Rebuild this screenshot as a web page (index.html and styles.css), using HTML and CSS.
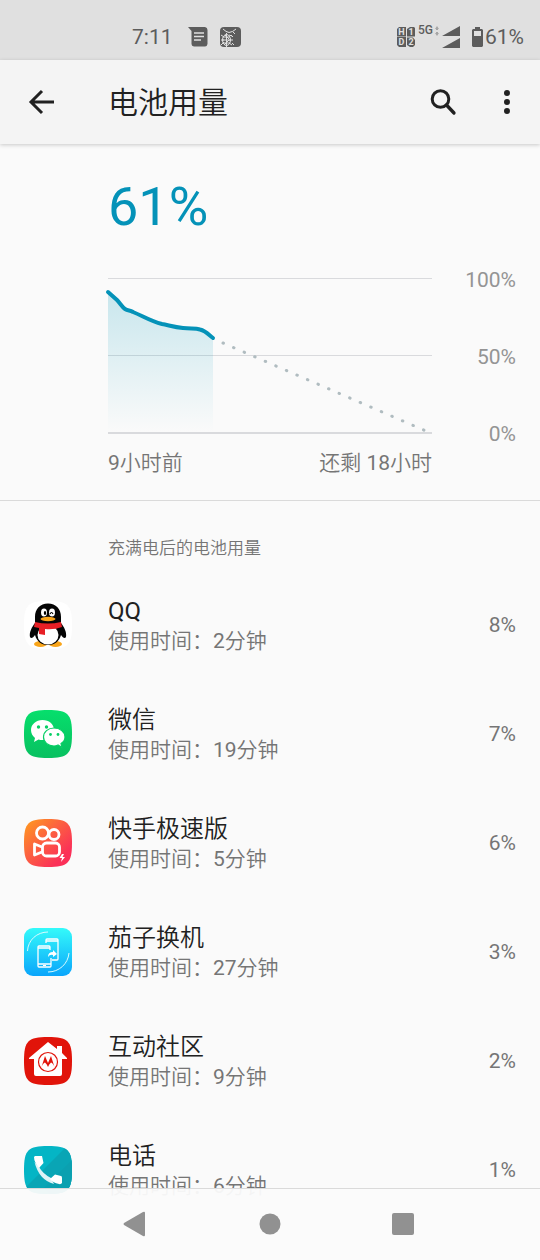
FILE: index.html
```html
<!DOCTYPE html>
<html lang="zh-CN">
<head>
  <meta charset="UTF-8" />
  <meta name="viewport" content="width=device-width, initial-scale=1" />
  <title>电池用量</title>
  <link rel="stylesheet" href="styles.css">
</head>
<body>

  <div class="status-bar">
    <div class="status-left">
      <span>7:11</span>
      <svg class="status-message" width="20" height="20" viewBox="0 0 20 20" aria-hidden="true">
        <path fill="#5c5c5c" d="M0 0H17Q19.500 .5 19.500 3V17Q19 19.500 17 19.500H6Q3.500 19 3.500 17V4Z"/>
        <path stroke="#e0e0e0" stroke-width="1.500" d="M6 6H16M6 9.500H16M6 13H13"/>
      </svg>
      <svg width="21" height="20" viewBox="0 0 21 20" aria-hidden="true">
        <rect width="21" height="20" rx="4" fill="#5c5c5c"/>
        <g fill="none" stroke="#e0e0e0">
          <path d="M3 2Q6 5 9 5.500Q13 5 16 2M1 8L4 10M1 13H4M1 18L4 15M12 9L9 8M13 13H9M12 18L9 16"/>
          <ellipse cx="6.500" cy="13" rx="4" ry="5.500"/>
          <path d="M6.500 6V20M3 10H10M2 13H11M3 16H10M5 8L9 12M4 18L9 13"/>
          <path d="M11 8L13 10M13 5L15 7M12 16L14 18"/>
        </g>
      </svg>
    </div>
    <div class="status-right">
      <svg width="19" height="20" viewBox="0 0 19 20" aria-hidden="true">
        <path fill="#5c5c5c" d="M2 0H9V9.500H0V2ZM2 10H9V20H2L0 18V10ZM13 0H17L18 1V9.500H10V2ZM10 10.500H16L18 13V18L16 20H13L10 18Z"/>
        <g class="sim-text">
          <text x="4.500" y="8">H</text>
          <text x="14" y="8">1</text>
          <text x="4.500" y="18">D</text>
          <text x="14" y="18">2</text>
        </g>
      </svg>
      <span class="network">5G</span>
      <svg width="26" height="22" viewBox="0 0 26 22" aria-hidden="true">
        <path fill="#a5a5a5" d="M2 0L4 3H0ZM2 10L0 7H4ZM1 3H3V4H1ZM1 6H3V7H1Z"/>
        <path fill="#5c5c5c" d="M25 0V10H7ZM25 12V22H7Z"/>
      </svg>
      <svg class="battery" width="11" height="20" viewBox="0 0 11 20" aria-hidden="true">
        <path fill="#5c5c5c" d="M3 0H8V2H10L11 3V19L10 20H1L0 19V3L1 2H3ZM2 4V9H9V4Z"/>
      </svg>
      <span>61%</span>
    </div>
  </div>

  <header class="app-bar">
    <button class="icon-button" aria-label="返回">
      <svg width="26" height="26" viewBox="0 0 26 26">
        <path fill="none" stroke="#212121" stroke-width="3" d="M25 13H3M13 2L2 13L13 24"/>
      </svg>
    </button>
    <h1>电池用量</h1>
    <button class="icon-button" aria-label="搜索">
      <svg width="26" height="26" viewBox="0 0 26 26">
        <circle cx="10.500" cy="10" r="8.300" fill="none" stroke="#212121" stroke-width="3"/>
        <path stroke="#212121" stroke-width="3.300" stroke-linecap="round" d="M16.500 16L24 24"/>
      </svg>
    </button>
    <button class="icon-button" aria-label="更多选项">
      <svg width="26" height="26" viewBox="0 0 26 26" fill="#212121">
        <circle cx="13" cy="4" r="3"/>
        <circle cx="13" cy="13" r="3"/>
        <circle cx="13" cy="22" r="3"/>
      </svg>
    </button>
  </header>

  <main>
    <section class="summary">
      <p class="level">61%</p>
      <div class="chart">
        <svg class="graph" viewBox="0 0 324 156" preserveAspectRatio="none" role="img" aria-label="电池电量">
          <defs>
            <linearGradient id="fill" x1="0" y1="0" x2="0" y2="1">
              <stop offset="0" stop-color="#0097b8" stop-opacity=".2"/>
              <stop offset="1" stop-color="#0097b8" stop-opacity="0"/>
            </linearGradient>
          </defs>
          <path class="grid-line" d="M0 .5H324M0 77.500H324"/>
          <path class="base-line" d="M0 155H324"/>
          <path fill="url(#fill)" d="M0 14L9 22C12 25 14 29 17 31S22 32 25 34C35 38 42 43 54 46C60 47 66 49 75 50C83 51 87 50 92 51.500C98 53 101 57 105 60V154H0Z"/>
          <path class="history" d="M0 14L9 22C12 25 14 29 17 31S22 32 25 34C35 38 42 43 54 46C60 47 66 49 75 50C83 51 87 50 92 51.500C98 53 101 57 105 60"/>
          <path class="forecast" d="M115 65L318 153"/>
        </svg>
        <div class="scale">
          <span>100%</span>
          <span>50%</span>
          <span>0%</span>
        </div>
        <div class="times">
          <span>9小时前</span>
          <span>还剩 18小时</span>
        </div>
      </div>
    </section>

    <section class="usage">
      <h2>充满电后的电池用量</h2>
      <ul>
        <li>
          <svg class="app-icon" viewBox="0 0 48 48" aria-hidden="true">
            <path fill="#fff" d="M24 0C44 0 48 4 48 24S44 48 24 48 0 44 0 24 4 0 24 0Z"/>
            <ellipse cx="16.500" cy="43" rx="6.500" ry="3" fill="#f9a51a"/>
            <ellipse cx="31.500" cy="43" rx="6.500" ry="3" fill="#f9a51a"/>
            <path fill="#050505" d="M24 2.500C16 2.500 11 8 11 16V22C8 26 5 31 6 36C7 38 9 37 11 34C13 41 18 44 24 44S35 41 37 34C39 37 41 38 42 36C43 31 40 26 37 22V16C37 8 32 2.500 24 2.500Z"/>
            <ellipse cx="24" cy="34" rx="10.500" ry="9.500" fill="#fff"/>
            <ellipse cx="20" cy="11.500" rx="3" ry="4" fill="#fff"/>
            <ellipse cx="28" cy="11.500" rx="3" ry="4" fill="#fff"/>
            <ellipse cx="21" cy="12" rx="1.200" ry="2"/>
            <path d="M26 13Q27.500 10 29 13" fill="none" stroke="#000" stroke-width="1.200"/>
            <ellipse cx="24" cy="18" rx="7.500" ry="2.200" fill="#f9a51a"/>
            <path fill="#e71f25" d="M11 21Q24 24 37 21L38 26Q30 29 21 28V34L15 33V27L10 26Z"/>
          </svg>
          <div class="app-text">
            <h3>QQ</h3>
            <p>使用时间：2分钟</p>
          </div>
          <span class="percent">8%</span>
        </li>
        <li>
          <svg class="app-icon" viewBox="0 0 48 48" aria-hidden="true">
            <defs>
              <linearGradient id="wechat" x1="0" y1="0" x2="0" y2="1">
                <stop offset="0" stop-color="#06df6c"/>
                <stop offset="1" stop-color="#08c060"/>
              </linearGradient>
            </defs>
            <path fill="url(#wechat)" d="M24 0C44 0 48 4 48 24S44 48 24 48 0 44 0 24 4 0 24 0Z"/>
            <path fill="#fff" d="M18.500 10C12 10 7 14.500 7 20C7 23 8.500 26 11 28L10 32L14.500 29.500Q16 30 19 30C25 30 30 26 30 20S25 10 18.500 10Z"/>
            <path fill="#fff" stroke="#07cf66" stroke-width="1.200" d="M30 18C24 18 19.500 22 19.500 27S24 36 30 36Q32 36 34 35L38 37.500L37 33.500C39.500 32 41 29.500 41 27C41 22 36 18 30 18Z"/>
            <g fill="#07cf66">
              <circle cx="14.500" cy="17" r="1.700"/>
              <circle cx="22.500" cy="17" r="1.700"/>
              <circle cx="26.500" cy="24.500" r="1.400"/>
              <circle cx="34" cy="24.500" r="1.400"/>
            </g>
          </svg>
          <div class="app-text">
            <h3>微信</h3>
            <p>使用时间：19分钟</p>
          </div>
          <span class="percent">7%</span>
        </li>
        <li>
          <svg class="app-icon" viewBox="0 0 48 48" aria-hidden="true">
            <defs>
              <linearGradient id="kuaishou" x1="0" y1="0" x2=".8" y2=".8">
                <stop offset="0" stop-color="#ff9d1c"/>
                <stop offset=".5" stop-color="#fc643f"/>
                <stop offset="1" stop-color="#fb3058"/>
              </linearGradient>
            </defs>
            <path fill="url(#kuaishou)" d="M24 0C44 0 48 4 48 24S44 48 24 48 0 44 0 24 4 0 24 0Z"/>
            <g fill="none" stroke="#fff" stroke-width="2.800" stroke-linejoin="round">
              <circle cx="18.500" cy="14" r="6"/>
              <circle cx="30" cy="15.500" r="5"/>
              <rect x="18.500" y="24" width="17" height="13" rx="4"/>
              <path d="M18 28L10.500 25V36L18 33"/>
            </g>
            <path fill="#fff" d="M38 35L35.500 39H38L37 43L41 38H38.500L40 35Z"/>
          </svg>
          <div class="app-text">
            <h3>快手极速版</h3>
            <p>使用时间：5分钟</p>
          </div>
          <span class="percent">6%</span>
        </li>
        <li>
          <svg class="app-icon" viewBox="0 0 48 48" aria-hidden="true">
            <defs>
              <linearGradient id="transfer" x1="0" y1="0" x2="0" y2="1">
                <stop offset="0" stop-color="#34fafa"/>
                <stop offset="1" stop-color="#0aa5fb"/>
              </linearGradient>
            </defs>
            <rect width="48" height="48" rx="9" fill="url(#transfer)"/>
            <path fill="none" stroke="#d8fbff" d="M3.500 23C4 12 13 4 24 4M45 25C44 36 35 44 24 44"/>
            <g fill="none" stroke="#fff" stroke-width="1.300">
              <path d="M22 15V12Q22 11 23 11H33Q34 11 34 12V31Q34 32 33 32H28"/>
              <path d="M26 22V19Q26 18 25 18H15Q14 18 14 19V38Q14 39 15 39H26Q27 39 27 38V30"/>
              <path d="M14 20H26M14 36H27M22 13H34"/>
            </g>
            <path fill="#fff" d="M24 29Q24 24 29 24V22L33 26L29 29V27Q26 26 24 29ZM19 37H22V38H19Z"/>
          </svg>
          <div class="app-text">
            <h3>茄子换机</h3>
            <p>使用时间：27分钟</p>
          </div>
          <span class="percent">3%</span>
        </li>
        <li>
          <svg class="app-icon" viewBox="0 0 48 48" aria-hidden="true">
            <path fill="#e1140a" d="M24 0C44 0 48 4 48 24S44 48 24 48 0 44 0 24 4 0 24 0Z"/>
            <path fill="#fff" d="M24 5L33 12V9H38V16L43 21V22H38V37Q38 39 36 39H12Q10 39 10 37V22H5V21Z"/>
            <circle cx="24" cy="25" r="9.500" fill="none" stroke="#e1140a" stroke-width="1.200"/>
            <path fill="#e1140a" d="M17.500 30L21 19L24 26L27 19L30.500 30Q29 26 27 25.500Q25 27 24 30Q23 27 21 25.500Q19 26 17.500 30Z"/>
          </svg>
          <div class="app-text">
            <h3>互动社区</h3>
            <p>使用时间：9分钟</p>
          </div>
          <span class="percent">2%</span>
        </li>
        <li>
          <svg class="app-icon" viewBox="0 0 48 48" aria-hidden="true">
            <defs>
              <clipPath id="phone-shape">
                <path d="M24 0C44 0 48 4 48 24S44 48 24 48 0 44 0 24 4 0 24 0Z"/>
              </clipPath>
            </defs>
            <g clip-path="url(#phone-shape)">
              <rect width="48" height="48" fill="#04b5c5"/>
              <path fill="#09a5b5" d="M43 0L0 43V48H48V0Z"/>
              <path fill="#0ba0b0" d="M48 14L20 42L26 48H48Z"/>
            </g>
            <path fill="#dff3f6" d="M10.500 16L15 21Q19 28 27 32L30 38Q15 34 10.500 16Z"/>
            <path fill="#fff" d="M11 10H18L19.500 17L15 22Q10 16 10 11ZM26 33L31 28.500L37 30Q38 30 38 32V37Q37 38.500 35 38Q29 37 26 33Z"/>
          </svg>
          <div class="app-text">
            <h3>电话</h3>
            <p>使用时间：6分钟</p>
          </div>
          <span class="percent">1%</span>
        </li>
      </ul>
    </section>
  </main>

  <nav class="nav-bar">
    <button class="icon-button" aria-label="后退">
      <svg width="24" height="24" viewBox="0 0 24 24"><path fill="#919191" d="M19 0Q21 -1 21 1V23Q21 25 19 24L0 13Q-1 12 0 11Z"/></svg>
    </button>
    <button class="icon-button" aria-label="主屏幕">
      <svg width="24" height="24" viewBox="0 0 24 24"><circle cx="12" cy="12" r="10.500" fill="#919191"/></svg>
    </button>
    <button class="icon-button" aria-label="最近任务">
      <svg width="24" height="24" viewBox="0 0 24 24"><rect x="0" y="1" width="22" height="22" rx="2" fill="#919191"/></svg>
    </button>
  </nav>

</body>
</html>
```

FILE: styles.css
```css
* {
  box-sizing: border-box;
  margin: 0;
  padding: 0;
}
body {
  font-family: Roboto, "Noto Sans CJK SC DemiLight", "Noto Sans CJK SC", sans-serif;
  font-size: 21px;
  line-height: 24px;
  background: #fafafa;
  color: #212121;
}
h1, h2, h3 {
  font-weight: 400;
}
svg {
  display: block;
  flex: none;
  overflow: visible;
}
.status-bar {
  display: flex;
  justify-content: space-between;
  height: 60px;
  padding: 13px 16px 0 132px;
  background: #e0e0e0;
  color: #5c5c5c;
}
.status-left, .status-right {
  display: flex;
  align-items: center;
}
.status-left {
  gap: 12px;
}
.status-message {
  margin-left: 3px;
}
.status-right {
  gap: 2px;
}
.sim-text {
  font-size: 9px;
  font-weight: 700;
  fill: #e0e0e0;
  text-anchor: middle;
}
.network {
  align-self: flex-start;
  margin-top: 5px;
  font-size: 12px;
  font-weight: 500;
  line-height: 24px;
}
.battery {
  margin-left: 9px;
}
.app-bar {
  position: relative;
  display: flex;
  align-items: center;
  gap: 16px;
  height: 84px;
  padding: 0 9px 0 18px;
  background: #f4f4f4;
  box-shadow: 0 1px 4px rgba(0, 0, 0, 0.2);
}
.app-bar h1 {
  flex: 1;
  margin-left: 26px;
  padding-top: 2px;
  font-size: 30px;
  line-height: 36px;
}
.icon-button {
  display: flex;
  align-items: center;
  justify-content: center;
  width: 48px;
  height: 48px;
  border: none;
  background: none;
  cursor: pointer;
}
.summary {
  padding: 31px 24px 25px 108px;
  border-bottom: 1px solid #dadada;
}
.level {
  font-size: 54px;
  line-height: 64px;
  color: #0492b8;
}
.chart {
  display: grid;
  grid-template-columns: 1fr 84px;
  margin-top: 29px;
}
.graph {
  width: 100%;
  height: 156px;
  margin-top: 10px;
}
.grid-line, .base-line {
  fill: none;
  stroke: #d9dadd;
}
.base-line {
  stroke-width: 2;
}
.history {
  fill: none;
  stroke: #0492b8;
  stroke-width: 4;
  stroke-linecap: round;
  stroke-linejoin: round;
}
.forecast {
  fill: none;
  stroke: #b0bcc0;
  stroke-width: 3;
  stroke-linecap: round;
  stroke-dasharray: 0.5 11;
}
.scale {
  display: flex;
  flex-direction: column;
  justify-content: space-between;
  height: 178px;
  text-align: right;
  color: #949494;
}
.times {
  display: flex;
  justify-content: space-between;
  margin-top: 5px;
  color: #757575;
}
.usage h2 {
  padding: 35px 24px 10px 108px;
  font-size: 17px;
  line-height: 24px;
  color: #757575;
}
.usage ul {
  list-style: none;
}
.usage li {
  display: flex;
  align-items: center;
  height: 109px;
  padding: 0 24px;
}
.app-icon {
  width: 48px;
  height: 48px;
}
.app-text {
  flex: 1;
  margin-left: 36px;
  padding-top: 3px;
}
.app-text h3 {
  font-size: 24px;
  line-height: 30px;
}
.app-text p {
  line-height: 30px;
  color: #757575;
}
.percent {
  color: #757575;
}
.nav-bar {
  position: fixed;
  right: 0;
  bottom: 0;
  left: 0;
  display: flex;
  align-items: center;
  justify-content: center;
  gap: 86px;
  height: 72px;
  padding-bottom: 2px;
  border-top: 1px solid #dadada;
  background: rgba(251, 251, 251, 0.95);
}
```
